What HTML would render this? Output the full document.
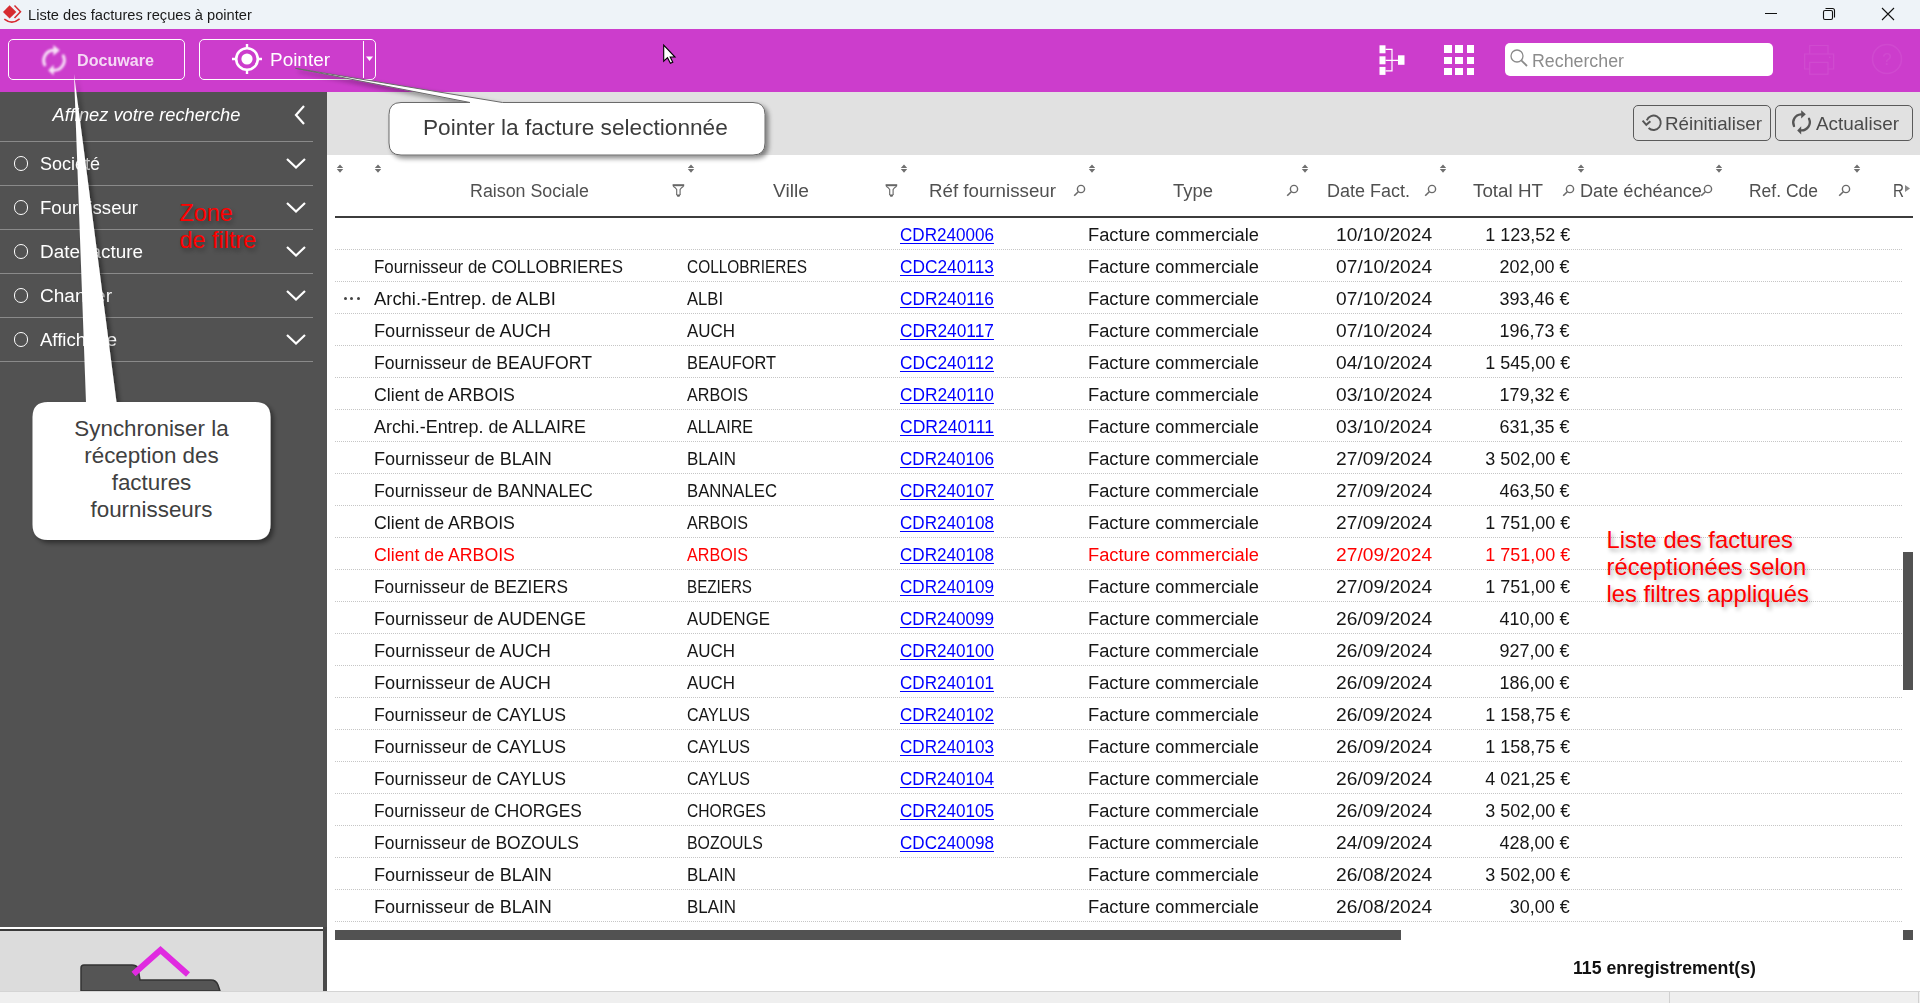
<!DOCTYPE html><html><head><meta charset="utf-8"><style>
html,body{margin:0;padding:0;}
body{width:1920px;height:1003px;overflow:hidden;position:relative;background:#fff;font-family:"Liberation Sans",sans-serif;}
.a{position:absolute;}
.t{position:absolute;white-space:pre;line-height:1;}
.u{text-decoration:underline;text-underline-offset:2px;text-decoration-thickness:1px;}
</style></head><body>

<div class="a" style="left:0;top:0;width:1920px;height:29px;background:#EEF3F8;"></div>
<svg class="a" style="left:0;top:0" width="24" height="26" viewBox="0 0 24 26">
<path d="M3 12 L9.6 5.2 L16.3 12 L9.6 18.6 Z" fill="#D62B30"/>
<path d="M14.5 5.6 L20.5 11.8 L14.5 18.1" fill="none" stroke="#D62B30" stroke-width="1.5"/>
<path d="M4.3 19.2 Q12 25.2 19.6 18.9" fill="none" stroke="#D62B30" stroke-width="1.5"/>
</svg>
<div class="t" style="top:7.33px;font-size:15.2px;color:#1a1a1a;left:28.00px;transform-origin:0 0;transform:scaleX(0.9640);">Liste des factures reçues à pointer</div>
<div class="a" style="left:1765px;top:13px;width:12px;height:1px;background:#111;"></div>
<svg class="a" style="left:1822px;top:7px" width="14" height="14" viewBox="0 0 14 14">
<rect x="1.5" y="3.5" width="9" height="9" rx="1.5" fill="none" stroke="#111" stroke-width="1.1"/>
<path d="M3.5 1.5 H10.5 Q12.5 1.5 12.5 3.5 V10.5" fill="none" stroke="#111" stroke-width="1.1"/>
</svg>
<svg class="a" style="left:1881px;top:7px" width="14" height="14" viewBox="0 0 14 14">
<path d="M1 1 L13 13 M13 1 L1 13" stroke="#111" stroke-width="1.1"/>
</svg>
<div class="a" style="left:0;top:29px;width:1920px;height:63px;background:#CC3DCC;"></div>
<div class="a" style="left:8px;top:39px;width:175px;height:38.5px;border:1.5px solid #fff;border-radius:5px;"></div>
<svg class="a" style="left:40px;top:42px;opacity:0.85;filter:blur(0.8px)" width="34" height="36" viewBox="0 0 34 34">
<g transform="scale(1.24) translate(-4.2,-2.4)">
<path d="M8 20 A8.2 8.2 0 0 1 14.9 8.3" fill="none" stroke="#fff" stroke-width="2.4" stroke-linecap="round"/>
<path d="M15 4 L20.2 8.3 L15 12.6 Z" fill="#fff"/>
<path d="M23 12.7 A8.2 8.2 0 0 1 15.2 24.4" fill="none" stroke="#fff" stroke-width="2.4" stroke-linecap="round"/>
<path d="M15.2 20 L10.8 24.4 L15.2 28.6 Z" fill="#fff"/>
</g></svg>
<div class="t" style="top:51.71px;font-size:17px;color:rgba(255,255,255,0.8);font-weight:bold;left:77.00px;transform-origin:0 0;transform:scaleX(0.9477);filter:blur(0.75px);">Docuware</div>
<div class="a" style="left:199px;top:39px;width:175px;height:38.5px;border:1.5px solid #fff;border-radius:5px;"></div>
<div class="a" style="left:363px;top:41px;width:1.2px;height:37px;background:#fff;"></div>
<svg class="a" style="left:365px;top:56px" width="9" height="6" viewBox="0 0 9 6"><path d="M1 0.5 H8 L4.5 5 Z" fill="#fff"/></svg>
<svg class="a" style="left:231px;top:43px" width="32" height="32" viewBox="0 0 32 32">
<circle cx="16" cy="16" r="10.8" fill="none" stroke="#fff" stroke-width="2.6"/>
<circle cx="16" cy="16" r="5.6" fill="#fff"/>
<path d="M16 1 V5 M16 27 V31 M1 16 H5 M27 16 H31" stroke="#fff" stroke-width="2.4"/>
</svg>
<div class="t" style="top:52.09px;font-size:17.5px;color:#fff;left:269.50px;transform-origin:0 0;transform:scaleX(1.0820);">Pointer</div>
<svg class="a" style="left:1378px;top:44px" width="28" height="32" viewBox="0 0 28 32">
<rect x="1.5" y="1.3" width="6" height="8" fill="#fff"/><rect x="1.5" y="12.3" width="6" height="8" fill="#fff"/><rect x="1.5" y="22.9" width="6" height="8" fill="#fff"/>
<rect x="20" y="11.3" width="6.5" height="9.5" fill="#fff"/>
<path d="M7.5 5.3 H14 V26.9 H7.5 M7.5 16.3 H20" fill="none" stroke="#fff" stroke-width="1.2"/>
</svg>
<div class="a" style="left:1444.0px;top:45.3px;width:7.5px;height:7.5px;background:#fff;"></div>
<div class="a" style="left:1455.3px;top:45.3px;width:7.5px;height:7.5px;background:#fff;"></div>
<div class="a" style="left:1466.6px;top:45.3px;width:7.5px;height:7.5px;background:#fff;"></div>
<div class="a" style="left:1444.0px;top:56.5px;width:7.5px;height:7.5px;background:#fff;"></div>
<div class="a" style="left:1455.3px;top:56.5px;width:7.5px;height:7.5px;background:#fff;"></div>
<div class="a" style="left:1466.6px;top:56.5px;width:7.5px;height:7.5px;background:#fff;"></div>
<div class="a" style="left:1444.0px;top:67.7px;width:7.5px;height:7.5px;background:#fff;"></div>
<div class="a" style="left:1455.3px;top:67.7px;width:7.5px;height:7.5px;background:#fff;"></div>
<div class="a" style="left:1466.6px;top:67.7px;width:7.5px;height:7.5px;background:#fff;"></div>
<div class="a" style="left:1505px;top:43px;width:268px;height:33px;background:#fff;border-radius:5px;"></div>
<svg class="a" style="left:1509px;top:48px" width="20" height="20" viewBox="0 0 20 20">
<circle cx="8" cy="8" r="6" fill="none" stroke="#8a8a8a" stroke-width="1.3"/>
<path d="M12.3 12.3 L18 18" stroke="#8a8a8a" stroke-width="1.8"/>
</svg>
<div class="t" style="top:53.00px;font-size:17.6px;color:#8c8c8c;left:1531.50px;transform-origin:0 0;transform:scaleX(1.0112);">Rechercher</div>
<svg class="a" style="left:1800px;top:40px" width="40" height="40" viewBox="1800 40 40 40" opacity="0.07">
<path d="M1809.7 53.7 V45.5 H1828 V53.7" fill="none" stroke="#fff" stroke-width="1.2"/>
<path d="M1809.7 69 H1804.6 V54 H1833.6 V69 H1828" fill="none" stroke="#fff" stroke-width="1.2"/>
<rect x="1809.7" y="62.4" width="18.3" height="11.8" fill="none" stroke="#fff" stroke-width="1.2"/>
<circle cx="1829.8" cy="57.3" r="0.9" fill="#fff"/>
</svg>
<svg class="a" style="left:1871px;top:43px" width="32" height="32" viewBox="0 0 32 32" opacity="0.06">
<circle cx="16" cy="16" r="14.5" fill="none" stroke="#fff" stroke-width="1.5"/>
<text x="16" y="22" font-size="17" text-anchor="middle" fill="#fff" font-family="Liberation Sans">?</text>
</svg>
<div class="a" style="left:0;top:92px;width:327px;height:899px;background:#525252;"></div>
<div class="t" style="top:106.50px;font-size:17.6px;color:#fff;font-style:italic;left:55.51px;transform-origin:90.49px 0;transform:scaleX(1.0388);">Affinez votre recherche</div>
<svg class="a" style="left:293px;top:104px" width="14" height="22" viewBox="0 0 14 22"><path d="M11 2 L3 11 L11 20" fill="none" stroke="#fff" stroke-width="2.2"/></svg>
<div class="a" style="left:0;top:141px;width:313px;height:1px;background:#8a8a8a;"></div>
<div class="a" style="left:0;top:185px;width:313px;height:1px;background:#8a8a8a;"></div>
<div class="a" style="left:0;top:229px;width:313px;height:1px;background:#8a8a8a;"></div>
<div class="a" style="left:0;top:273px;width:313px;height:1px;background:#8a8a8a;"></div>
<div class="a" style="left:0;top:317px;width:313px;height:1px;background:#8a8a8a;"></div>
<div class="a" style="left:0;top:361px;width:313px;height:1px;background:#8a8a8a;"></div>
<div class="a" style="left:13.5px;top:156px;width:12.5px;height:12.5px;border:1.5px solid #fff;border-radius:50%;"></div>
<div class="t" style="top:155.50px;font-size:17.6px;color:#fff;left:39.50px;transform-origin:0 0;transform:scaleX(1.0220);">Société</div>
<svg class="a" style="left:285px;top:157px" width="22" height="12" viewBox="0 0 22 12"><path d="M2 2 L11 10.5 L20 2" fill="none" stroke="#fff" stroke-width="2.2"/></svg>
<div class="a" style="left:13.5px;top:200px;width:12.5px;height:12.5px;border:1.5px solid #fff;border-radius:50%;"></div>
<div class="t" style="top:199.50px;font-size:17.6px;color:#fff;left:39.50px;transform-origin:0 0;transform:scaleX(1.0546);">Fournisseur</div>
<svg class="a" style="left:285px;top:201px" width="22" height="12" viewBox="0 0 22 12"><path d="M2 2 L11 10.5 L20 2" fill="none" stroke="#fff" stroke-width="2.2"/></svg>
<div class="a" style="left:13.5px;top:244px;width:12.5px;height:12.5px;border:1.5px solid #fff;border-radius:50%;"></div>
<div class="t" style="top:243.50px;font-size:17.6px;color:#fff;left:39.50px;transform-origin:0 0;transform:scaleX(1.0743);">Date facture</div>
<svg class="a" style="left:285px;top:245px" width="22" height="12" viewBox="0 0 22 12"><path d="M2 2 L11 10.5 L20 2" fill="none" stroke="#fff" stroke-width="2.2"/></svg>
<div class="a" style="left:13.5px;top:288px;width:12.5px;height:12.5px;border:1.5px solid #fff;border-radius:50%;"></div>
<div class="t" style="top:287.50px;font-size:17.6px;color:#fff;left:39.50px;transform-origin:0 0;transform:scaleX(1.0823);">Chantier</div>
<svg class="a" style="left:285px;top:289px" width="22" height="12" viewBox="0 0 22 12"><path d="M2 2 L11 10.5 L20 2" fill="none" stroke="#fff" stroke-width="2.2"/></svg>
<div class="a" style="left:13.5px;top:332px;width:12.5px;height:12.5px;border:1.5px solid #fff;border-radius:50%;"></div>
<div class="t" style="top:331.50px;font-size:17.6px;color:#fff;left:39.50px;transform-origin:0 0;transform:scaleX(1.0538);">Affichage</div>
<svg class="a" style="left:285px;top:333px" width="22" height="12" viewBox="0 0 22 12"><path d="M2 2 L11 10.5 L20 2" fill="none" stroke="#fff" stroke-width="2.2"/></svg>
<div class="a" style="left:0;top:927px;width:323px;height:2px;background:#fff;"></div>
<div class="a" style="left:0;top:929px;width:323px;height:2px;background:#3a3a3a;"></div>
<div class="a" style="left:0;top:931px;width:323px;height:60px;background:#DCDCDC;"></div>
<div class="a" style="left:323px;top:927px;width:4px;height:64px;background:#4a4a4a;"></div>
<svg class="a" style="left:78px;top:940px" width="150" height="51" viewBox="0 0 150 51">
<path d="M3 51 V28 Q3 25 6 25 H54 Q58 25 60 28 L62 40 H133 Q138 40 140 45 L142 51 Z" fill="#555" stroke="#333" stroke-width="1.5"/>
<path d="M55.5 34 L82.5 10 L110 34.5" fill="none" stroke="#E02AE0" stroke-width="6"/>
</svg>
<div class="a" style="left:327px;top:92px;width:1593px;height:63px;background:#E1E1E1;"></div>
<div class="a" style="left:1633px;top:105px;width:136px;height:34px;border:1px solid #5a5a5a;border-radius:5px;"></div>
<div class="a" style="left:1775px;top:105px;width:136px;height:34px;border:1px solid #5a5a5a;border-radius:5px;"></div>
<svg class="a" style="left:1636px;top:106px" width="40" height="34" viewBox="0 0 40 34">
<path d="M12.6 22 A7.2 7.2 0 1 0 10.8 14.3" fill="none" stroke="#555" stroke-width="1.9"/>
<path d="M6.6 14.6 L10.3 18.8 L14.4 15.2" fill="none" stroke="#555" stroke-width="2" stroke-linejoin="miter"/>
</svg>
<svg class="a" style="left:1786px;top:106px" width="34" height="34" viewBox="0 0 34 34">
<path d="M8 20 A8.2 8.2 0 0 1 14.9 8.3" fill="none" stroke="#555" stroke-width="2.3" stroke-linecap="round"/>
<path d="M15.2 4.2 L19.8 8.3 L15.2 12.4 Z" fill="#555"/>
<path d="M23 12.7 A8.2 8.2 0 0 1 15.2 24.4" fill="none" stroke="#555" stroke-width="2.3" stroke-linecap="round"/>
<path d="M15.2 20.2 L11.2 24.4 L15.2 28.4 Z" fill="#555"/>
</svg>
<div class="t" style="top:114.94px;font-size:18.5px;color:#4a4a4a;left:1664.50px;transform-origin:0 0;transform:scaleX(1.0144);">Réinitialiser</div>
<div class="t" style="top:114.94px;font-size:18.5px;color:#4a4a4a;left:1816.00px;transform-origin:0 0;transform:scaleX(1.0218);">Actualiser</div>
<svg class="a" style="left:336px;top:164px" width="8" height="10" viewBox="0 0 8 10"><path d="M4 0.6 L7.2 4 H0.8 Z M0.8 5 H7.2 L4 8.8 Z" fill="#707070"/></svg>
<svg class="a" style="left:374px;top:164px" width="8" height="10" viewBox="0 0 8 10"><path d="M4 0.6 L7.2 4 H0.8 Z M0.8 5 H7.2 L4 8.8 Z" fill="#707070"/></svg>
<svg class="a" style="left:687px;top:164px" width="8" height="10" viewBox="0 0 8 10"><path d="M4 0.6 L7.2 4 H0.8 Z M0.8 5 H7.2 L4 8.8 Z" fill="#707070"/></svg>
<svg class="a" style="left:900px;top:164px" width="8" height="10" viewBox="0 0 8 10"><path d="M4 0.6 L7.2 4 H0.8 Z M0.8 5 H7.2 L4 8.8 Z" fill="#707070"/></svg>
<svg class="a" style="left:1088px;top:164px" width="8" height="10" viewBox="0 0 8 10"><path d="M4 0.6 L7.2 4 H0.8 Z M0.8 5 H7.2 L4 8.8 Z" fill="#707070"/></svg>
<svg class="a" style="left:1301px;top:164px" width="8" height="10" viewBox="0 0 8 10"><path d="M4 0.6 L7.2 4 H0.8 Z M0.8 5 H7.2 L4 8.8 Z" fill="#707070"/></svg>
<svg class="a" style="left:1439px;top:164px" width="8" height="10" viewBox="0 0 8 10"><path d="M4 0.6 L7.2 4 H0.8 Z M0.8 5 H7.2 L4 8.8 Z" fill="#707070"/></svg>
<svg class="a" style="left:1577px;top:164px" width="8" height="10" viewBox="0 0 8 10"><path d="M4 0.6 L7.2 4 H0.8 Z M0.8 5 H7.2 L4 8.8 Z" fill="#707070"/></svg>
<svg class="a" style="left:1715px;top:164px" width="8" height="10" viewBox="0 0 8 10"><path d="M4 0.6 L7.2 4 H0.8 Z M0.8 5 H7.2 L4 8.8 Z" fill="#707070"/></svg>
<svg class="a" style="left:1853px;top:164px" width="8" height="10" viewBox="0 0 8 10"><path d="M4 0.6 L7.2 4 H0.8 Z M0.8 5 H7.2 L4 8.8 Z" fill="#707070"/></svg>
<div class="t" style="top:182.50px;font-size:17.6px;color:#505050;left:469.50px;transform-origin:0 0;transform:scaleX(1.0136);">Raison Sociale</div>
<div class="t" style="top:182.50px;font-size:17.6px;color:#505050;left:772.50px;transform-origin:0 0;transform:scaleX(1.0928);">Ville</div>
<div class="t" style="top:182.50px;font-size:17.6px;color:#505050;left:928.75px;transform-origin:0 0;transform:scaleX(1.0641);">Réf fournisseur</div>
<div class="t" style="top:182.50px;font-size:17.6px;color:#505050;left:1173.30px;transform-origin:0 0;transform:scaleX(1.0483);">Type</div>
<div class="t" style="top:182.50px;font-size:17.6px;color:#505050;left:1327.40px;transform-origin:0 0;transform:scaleX(1.0224);">Date Fact.</div>
<div class="t" style="top:182.50px;font-size:17.6px;color:#505050;left:1472.70px;transform-origin:0 0;transform:scaleX(1.0682);">Total HT</div>
<div class="t" style="top:182.50px;font-size:17.6px;color:#505050;left:1580.30px;transform-origin:0 0;transform:scaleX(1.0304);">Date échéance</div>
<div class="t" style="top:182.50px;font-size:17.6px;color:#505050;left:1748.80px;transform-origin:0 0;transform:scaleX(0.9934);">Ref. Cde</div>
<div class="t" style="top:182.50px;font-size:17.6px;color:#505050;left:1892.50px;transform-origin:0 0;transform:scaleX(0.8654);">R</div>
<svg class="a" style="left:672px;top:184px" width="13" height="14" viewBox="0 0 13 14"><rect x="0.6" y="0.2" width="11.6" height="2" fill="#666"/><path d="M1.2 2.2 Q3.8 3.8 4.7 5.4 V11 M8.1 11 V5.4 Q9 3.8 11.6 2.2" fill="none" stroke="#666" stroke-width="1.1"/><path d="M4.2 10.6 H8.6 L7.4 12.8 H5.4 Z" fill="#666"/></svg>
<svg class="a" style="left:885px;top:184px" width="13" height="14" viewBox="0 0 13 14"><rect x="0.6" y="0.2" width="11.6" height="2" fill="#666"/><path d="M1.2 2.2 Q3.8 3.8 4.7 5.4 V11 M8.1 11 V5.4 Q9 3.8 11.6 2.2" fill="none" stroke="#666" stroke-width="1.1"/><path d="M4.2 10.6 H8.6 L7.4 12.8 H5.4 Z" fill="#666"/></svg>
<svg class="a" style="left:1073px;top:184px" width="13" height="13" viewBox="0 0 13 13"><circle cx="8" cy="5" r="3.6" fill="none" stroke="#6a6a6a" stroke-width="1.4"/><path d="M5.3 7.7 L1.2 11.8" stroke="#6a6a6a" stroke-width="1.6"/></svg>
<svg class="a" style="left:1286px;top:184px" width="13" height="13" viewBox="0 0 13 13"><circle cx="8" cy="5" r="3.6" fill="none" stroke="#6a6a6a" stroke-width="1.4"/><path d="M5.3 7.7 L1.2 11.8" stroke="#6a6a6a" stroke-width="1.6"/></svg>
<svg class="a" style="left:1424px;top:184px" width="13" height="13" viewBox="0 0 13 13"><circle cx="8" cy="5" r="3.6" fill="none" stroke="#6a6a6a" stroke-width="1.4"/><path d="M5.3 7.7 L1.2 11.8" stroke="#6a6a6a" stroke-width="1.6"/></svg>
<svg class="a" style="left:1562px;top:184px" width="13" height="13" viewBox="0 0 13 13"><circle cx="8" cy="5" r="3.6" fill="none" stroke="#6a6a6a" stroke-width="1.4"/><path d="M5.3 7.7 L1.2 11.8" stroke="#6a6a6a" stroke-width="1.6"/></svg>
<svg class="a" style="left:1700px;top:184px" width="13" height="13" viewBox="0 0 13 13"><circle cx="8" cy="5" r="3.6" fill="none" stroke="#6a6a6a" stroke-width="1.4"/><path d="M5.3 7.7 L1.2 11.8" stroke="#6a6a6a" stroke-width="1.6"/></svg>
<svg class="a" style="left:1838px;top:184px" width="13" height="13" viewBox="0 0 13 13"><circle cx="8" cy="5" r="3.6" fill="none" stroke="#6a6a6a" stroke-width="1.4"/><path d="M5.3 7.7 L1.2 11.8" stroke="#6a6a6a" stroke-width="1.6"/></svg>
<svg class="a" style="left:1904px;top:184px" width="7" height="9" viewBox="0 0 7 9"><path d="M1 1 L6 4.5 L1 8 Z" fill="#8a8a8a"/></svg>
<div class="a" style="left:335px;top:216px;width:1578px;height:2px;background:#3c3c3c;"></div>
<div class="t u" style="top:226.90px;font-size:17.6px;color:#0000FF;left:900.00px;transform-origin:0 0;transform:scaleX(0.9704);">CDR240006</div>
<div class="t" style="top:226.90px;font-size:17.6px;color:#161616;left:1088.00px;transform-origin:0 0;transform:scaleX(1.0407);">Facture commerciale</div>
<div class="t" style="top:226.90px;font-size:17.6px;color:#161616;left:1344.41px;transform-origin:88.09px 0;transform:scaleX(1.0898);">10/10/2024</div>
<div class="t" style="top:226.90px;font-size:17.6px;color:#161616;left:1486.81px;transform-origin:83.19px 0;transform:scaleX(1.0218);">1 123,52 €</div>
<div class="a" style="left:335px;top:249px;width:1567px;height:1px;background:repeating-linear-gradient(to right,#c6c6c6 0 1px,transparent 1px 2px);"></div>
<div class="t" style="top:258.90px;font-size:17.6px;color:#161616;left:373.80px;transform-origin:0 0;transform:scaleX(0.9606);">Fournisseur de COLLOBRIERES</div>
<div class="t" style="top:258.90px;font-size:17.6px;color:#161616;left:687.00px;transform-origin:0 0;transform:scaleX(0.8763);">COLLOBRIERES</div>
<div class="t u" style="top:258.90px;font-size:17.6px;color:#0000FF;left:900.00px;transform-origin:0 0;transform:scaleX(0.9837);">CDC240113</div>
<div class="t" style="top:258.90px;font-size:17.6px;color:#161616;left:1088.00px;transform-origin:0 0;transform:scaleX(1.0407);">Facture commerciale</div>
<div class="t" style="top:258.90px;font-size:17.6px;color:#161616;left:1344.41px;transform-origin:88.09px 0;transform:scaleX(1.0898);">07/10/2024</div>
<div class="t" style="top:258.90px;font-size:17.6px;color:#161616;left:1501.49px;transform-origin:68.51px 0;transform:scaleX(1.0217);">202,00 €</div>
<div class="a" style="left:335px;top:281px;width:1567px;height:1px;background:repeating-linear-gradient(to right,#c6c6c6 0 1px,transparent 1px 2px);"></div>
<div class="t" style="top:290.90px;font-size:17.6px;color:#161616;left:373.80px;transform-origin:0 0;transform:scaleX(1.0451);">Archi.-Entrep. de ALBI</div>
<div class="t" style="top:290.90px;font-size:17.6px;color:#161616;left:687.00px;transform-origin:0 0;transform:scaleX(0.9435);">ALBI</div>
<div class="t u" style="top:290.90px;font-size:17.6px;color:#0000FF;left:900.00px;transform-origin:0 0;transform:scaleX(0.9837);">CDR240116</div>
<div class="t" style="top:290.90px;font-size:17.6px;color:#161616;left:1088.00px;transform-origin:0 0;transform:scaleX(1.0407);">Facture commerciale</div>
<div class="t" style="top:290.90px;font-size:17.6px;color:#161616;left:1344.41px;transform-origin:88.09px 0;transform:scaleX(1.0898);">07/10/2024</div>
<div class="t" style="top:290.90px;font-size:17.6px;color:#161616;left:1501.49px;transform-origin:68.51px 0;transform:scaleX(1.0217);">393,46 €</div>
<div class="a" style="left:335px;top:313px;width:1567px;height:1px;background:repeating-linear-gradient(to right,#c6c6c6 0 1px,transparent 1px 2px);"></div>
<div class="t" style="top:322.90px;font-size:17.6px;color:#161616;left:373.80px;transform-origin:0 0;transform:scaleX(1.0340);">Fournisseur de AUCH</div>
<div class="t" style="top:322.90px;font-size:17.6px;color:#161616;left:687.00px;transform-origin:0 0;transform:scaleX(0.9625);">AUCH</div>
<div class="t u" style="top:322.90px;font-size:17.6px;color:#0000FF;left:900.00px;transform-origin:0 0;transform:scaleX(0.9837);">CDR240117</div>
<div class="t" style="top:322.90px;font-size:17.6px;color:#161616;left:1088.00px;transform-origin:0 0;transform:scaleX(1.0407);">Facture commerciale</div>
<div class="t" style="top:322.90px;font-size:17.6px;color:#161616;left:1344.41px;transform-origin:88.09px 0;transform:scaleX(1.0898);">07/10/2024</div>
<div class="t" style="top:322.90px;font-size:17.6px;color:#161616;left:1501.49px;transform-origin:68.51px 0;transform:scaleX(1.0217);">196,73 €</div>
<div class="a" style="left:335px;top:345px;width:1567px;height:1px;background:repeating-linear-gradient(to right,#c6c6c6 0 1px,transparent 1px 2px);"></div>
<div class="t" style="top:354.90px;font-size:17.6px;color:#161616;left:373.80px;transform-origin:0 0;transform:scaleX(1.0009);">Fournisseur de BEAUFORT</div>
<div class="t" style="top:354.90px;font-size:17.6px;color:#161616;left:687.00px;transform-origin:0 0;transform:scaleX(0.9318);">BEAUFORT</div>
<div class="t u" style="top:354.90px;font-size:17.6px;color:#0000FF;left:900.00px;transform-origin:0 0;transform:scaleX(0.9837);">CDC240112</div>
<div class="t" style="top:354.90px;font-size:17.6px;color:#161616;left:1088.00px;transform-origin:0 0;transform:scaleX(1.0407);">Facture commerciale</div>
<div class="t" style="top:354.90px;font-size:17.6px;color:#161616;left:1344.41px;transform-origin:88.09px 0;transform:scaleX(1.0898);">04/10/2024</div>
<div class="t" style="top:354.90px;font-size:17.6px;color:#161616;left:1486.81px;transform-origin:83.19px 0;transform:scaleX(1.0218);">1 545,00 €</div>
<div class="a" style="left:335px;top:377px;width:1567px;height:1px;background:repeating-linear-gradient(to right,#c6c6c6 0 1px,transparent 1px 2px);"></div>
<div class="t" style="top:386.90px;font-size:17.6px;color:#161616;left:373.80px;transform-origin:0 0;transform:scaleX(1.0079);">Client de ARBOIS</div>
<div class="t" style="top:386.90px;font-size:17.6px;color:#161616;left:687.00px;transform-origin:0 0;transform:scaleX(0.9172);">ARBOIS</div>
<div class="t u" style="top:386.90px;font-size:17.6px;color:#0000FF;left:900.00px;transform-origin:0 0;transform:scaleX(0.9837);">CDR240110</div>
<div class="t" style="top:386.90px;font-size:17.6px;color:#161616;left:1088.00px;transform-origin:0 0;transform:scaleX(1.0407);">Facture commerciale</div>
<div class="t" style="top:386.90px;font-size:17.6px;color:#161616;left:1344.41px;transform-origin:88.09px 0;transform:scaleX(1.0898);">03/10/2024</div>
<div class="t" style="top:386.90px;font-size:17.6px;color:#161616;left:1501.49px;transform-origin:68.51px 0;transform:scaleX(1.0217);">179,32 €</div>
<div class="a" style="left:335px;top:409px;width:1567px;height:1px;background:repeating-linear-gradient(to right,#c6c6c6 0 1px,transparent 1px 2px);"></div>
<div class="t" style="top:418.90px;font-size:17.6px;color:#161616;left:373.80px;transform-origin:0 0;transform:scaleX(1.0174);">Archi.-Entrep. de ALLAIRE</div>
<div class="t" style="top:418.90px;font-size:17.6px;color:#161616;left:687.00px;transform-origin:0 0;transform:scaleX(0.9116);">ALLAIRE</div>
<div class="t u" style="top:418.90px;font-size:17.6px;color:#0000FF;left:900.00px;transform-origin:0 0;transform:scaleX(0.9973);">CDR240111</div>
<div class="t" style="top:418.90px;font-size:17.6px;color:#161616;left:1088.00px;transform-origin:0 0;transform:scaleX(1.0407);">Facture commerciale</div>
<div class="t" style="top:418.90px;font-size:17.6px;color:#161616;left:1344.41px;transform-origin:88.09px 0;transform:scaleX(1.0898);">03/10/2024</div>
<div class="t" style="top:418.90px;font-size:17.6px;color:#161616;left:1501.49px;transform-origin:68.51px 0;transform:scaleX(1.0217);">631,35 €</div>
<div class="a" style="left:335px;top:441px;width:1567px;height:1px;background:repeating-linear-gradient(to right,#c6c6c6 0 1px,transparent 1px 2px);"></div>
<div class="t" style="top:450.90px;font-size:17.6px;color:#161616;left:373.80px;transform-origin:0 0;transform:scaleX(1.0280);">Fournisseur de BLAIN</div>
<div class="t" style="top:450.90px;font-size:17.6px;color:#161616;left:687.00px;transform-origin:0 0;transform:scaleX(0.9633);">BLAIN</div>
<div class="t u" style="top:450.90px;font-size:17.6px;color:#0000FF;left:900.00px;transform-origin:0 0;transform:scaleX(0.9704);">CDR240106</div>
<div class="t" style="top:450.90px;font-size:17.6px;color:#161616;left:1088.00px;transform-origin:0 0;transform:scaleX(1.0407);">Facture commerciale</div>
<div class="t" style="top:450.90px;font-size:17.6px;color:#161616;left:1344.41px;transform-origin:88.09px 0;transform:scaleX(1.0898);">27/09/2024</div>
<div class="t" style="top:450.90px;font-size:17.6px;color:#161616;left:1486.81px;transform-origin:83.19px 0;transform:scaleX(1.0218);">3 502,00 €</div>
<div class="a" style="left:335px;top:473px;width:1567px;height:1px;background:repeating-linear-gradient(to right,#c6c6c6 0 1px,transparent 1px 2px);"></div>
<div class="t" style="top:482.90px;font-size:17.6px;color:#161616;left:373.80px;transform-origin:0 0;transform:scaleX(1.0085);">Fournisseur de BANNALEC</div>
<div class="t" style="top:482.90px;font-size:17.6px;color:#161616;left:687.00px;transform-origin:0 0;transform:scaleX(0.9486);">BANNALEC</div>
<div class="t u" style="top:482.90px;font-size:17.6px;color:#0000FF;left:900.00px;transform-origin:0 0;transform:scaleX(0.9704);">CDR240107</div>
<div class="t" style="top:482.90px;font-size:17.6px;color:#161616;left:1088.00px;transform-origin:0 0;transform:scaleX(1.0407);">Facture commerciale</div>
<div class="t" style="top:482.90px;font-size:17.6px;color:#161616;left:1344.41px;transform-origin:88.09px 0;transform:scaleX(1.0898);">27/09/2024</div>
<div class="t" style="top:482.90px;font-size:17.6px;color:#161616;left:1501.49px;transform-origin:68.51px 0;transform:scaleX(1.0217);">463,50 €</div>
<div class="a" style="left:335px;top:505px;width:1567px;height:1px;background:repeating-linear-gradient(to right,#c6c6c6 0 1px,transparent 1px 2px);"></div>
<div class="t" style="top:514.90px;font-size:17.6px;color:#161616;left:373.80px;transform-origin:0 0;transform:scaleX(1.0079);">Client de ARBOIS</div>
<div class="t" style="top:514.90px;font-size:17.6px;color:#161616;left:687.00px;transform-origin:0 0;transform:scaleX(0.9172);">ARBOIS</div>
<div class="t u" style="top:514.90px;font-size:17.6px;color:#0000FF;left:900.00px;transform-origin:0 0;transform:scaleX(0.9704);">CDR240108</div>
<div class="t" style="top:514.90px;font-size:17.6px;color:#161616;left:1088.00px;transform-origin:0 0;transform:scaleX(1.0407);">Facture commerciale</div>
<div class="t" style="top:514.90px;font-size:17.6px;color:#161616;left:1344.41px;transform-origin:88.09px 0;transform:scaleX(1.0898);">27/09/2024</div>
<div class="t" style="top:514.90px;font-size:17.6px;color:#161616;left:1486.81px;transform-origin:83.19px 0;transform:scaleX(1.0218);">1 751,00 €</div>
<div class="a" style="left:335px;top:537px;width:1567px;height:1px;background:repeating-linear-gradient(to right,#c6c6c6 0 1px,transparent 1px 2px);"></div>
<div class="t" style="top:546.90px;font-size:17.6px;color:#FF0000;left:373.80px;transform-origin:0 0;transform:scaleX(1.0079);">Client de ARBOIS</div>
<div class="t" style="top:546.90px;font-size:17.6px;color:#FF0000;left:687.00px;transform-origin:0 0;transform:scaleX(0.9172);">ARBOIS</div>
<div class="t u" style="top:546.90px;font-size:17.6px;color:#0000FF;left:900.00px;transform-origin:0 0;transform:scaleX(0.9704);">CDR240108</div>
<div class="t" style="top:546.90px;font-size:17.6px;color:#FF0000;left:1088.00px;transform-origin:0 0;transform:scaleX(1.0407);">Facture commerciale</div>
<div class="t" style="top:546.90px;font-size:17.6px;color:#FF0000;left:1344.41px;transform-origin:88.09px 0;transform:scaleX(1.0898);">27/09/2024</div>
<div class="t" style="top:546.90px;font-size:17.6px;color:#FF0000;left:1486.81px;transform-origin:83.19px 0;transform:scaleX(1.0218);">1 751,00 €</div>
<div class="a" style="left:335px;top:569px;width:1567px;height:1px;background:repeating-linear-gradient(to right,#c6c6c6 0 1px,transparent 1px 2px);"></div>
<div class="t" style="top:578.90px;font-size:17.6px;color:#161616;left:373.80px;transform-origin:0 0;transform:scaleX(0.9818);">Fournisseur de BEZIERS</div>
<div class="t" style="top:578.90px;font-size:17.6px;color:#161616;left:687.00px;transform-origin:0 0;transform:scaleX(0.8631);">BEZIERS</div>
<div class="t u" style="top:578.90px;font-size:17.6px;color:#0000FF;left:900.00px;transform-origin:0 0;transform:scaleX(0.9704);">CDR240109</div>
<div class="t" style="top:578.90px;font-size:17.6px;color:#161616;left:1088.00px;transform-origin:0 0;transform:scaleX(1.0407);">Facture commerciale</div>
<div class="t" style="top:578.90px;font-size:17.6px;color:#161616;left:1344.41px;transform-origin:88.09px 0;transform:scaleX(1.0898);">27/09/2024</div>
<div class="t" style="top:578.90px;font-size:17.6px;color:#161616;left:1486.81px;transform-origin:83.19px 0;transform:scaleX(1.0218);">1 751,00 €</div>
<div class="a" style="left:335px;top:601px;width:1567px;height:1px;background:repeating-linear-gradient(to right,#c6c6c6 0 1px,transparent 1px 2px);"></div>
<div class="t" style="top:610.90px;font-size:17.6px;color:#161616;left:373.80px;transform-origin:0 0;transform:scaleX(1.0175);">Fournisseur de AUDENGE</div>
<div class="t" style="top:610.90px;font-size:17.6px;color:#161616;left:687.00px;transform-origin:0 0;transform:scaleX(0.9536);">AUDENGE</div>
<div class="t u" style="top:610.90px;font-size:17.6px;color:#0000FF;left:900.00px;transform-origin:0 0;transform:scaleX(0.9704);">CDR240099</div>
<div class="t" style="top:610.90px;font-size:17.6px;color:#161616;left:1088.00px;transform-origin:0 0;transform:scaleX(1.0407);">Facture commerciale</div>
<div class="t" style="top:610.90px;font-size:17.6px;color:#161616;left:1344.41px;transform-origin:88.09px 0;transform:scaleX(1.0898);">26/09/2024</div>
<div class="t" style="top:610.90px;font-size:17.6px;color:#161616;left:1501.49px;transform-origin:68.51px 0;transform:scaleX(1.0217);">410,00 €</div>
<div class="a" style="left:335px;top:633px;width:1567px;height:1px;background:repeating-linear-gradient(to right,#c6c6c6 0 1px,transparent 1px 2px);"></div>
<div class="t" style="top:642.90px;font-size:17.6px;color:#161616;left:373.80px;transform-origin:0 0;transform:scaleX(1.0340);">Fournisseur de AUCH</div>
<div class="t" style="top:642.90px;font-size:17.6px;color:#161616;left:687.00px;transform-origin:0 0;transform:scaleX(0.9625);">AUCH</div>
<div class="t u" style="top:642.90px;font-size:17.6px;color:#0000FF;left:900.00px;transform-origin:0 0;transform:scaleX(0.9704);">CDR240100</div>
<div class="t" style="top:642.90px;font-size:17.6px;color:#161616;left:1088.00px;transform-origin:0 0;transform:scaleX(1.0407);">Facture commerciale</div>
<div class="t" style="top:642.90px;font-size:17.6px;color:#161616;left:1344.41px;transform-origin:88.09px 0;transform:scaleX(1.0898);">26/09/2024</div>
<div class="t" style="top:642.90px;font-size:17.6px;color:#161616;left:1501.49px;transform-origin:68.51px 0;transform:scaleX(1.0217);">927,00 €</div>
<div class="a" style="left:335px;top:665px;width:1567px;height:1px;background:repeating-linear-gradient(to right,#c6c6c6 0 1px,transparent 1px 2px);"></div>
<div class="t" style="top:674.90px;font-size:17.6px;color:#161616;left:373.80px;transform-origin:0 0;transform:scaleX(1.0340);">Fournisseur de AUCH</div>
<div class="t" style="top:674.90px;font-size:17.6px;color:#161616;left:687.00px;transform-origin:0 0;transform:scaleX(0.9625);">AUCH</div>
<div class="t u" style="top:674.90px;font-size:17.6px;color:#0000FF;left:900.00px;transform-origin:0 0;transform:scaleX(0.9704);">CDR240101</div>
<div class="t" style="top:674.90px;font-size:17.6px;color:#161616;left:1088.00px;transform-origin:0 0;transform:scaleX(1.0407);">Facture commerciale</div>
<div class="t" style="top:674.90px;font-size:17.6px;color:#161616;left:1344.41px;transform-origin:88.09px 0;transform:scaleX(1.0898);">26/09/2024</div>
<div class="t" style="top:674.90px;font-size:17.6px;color:#161616;left:1501.49px;transform-origin:68.51px 0;transform:scaleX(1.0217);">186,00 €</div>
<div class="a" style="left:335px;top:697px;width:1567px;height:1px;background:repeating-linear-gradient(to right,#c6c6c6 0 1px,transparent 1px 2px);"></div>
<div class="t" style="top:706.90px;font-size:17.6px;color:#161616;left:373.80px;transform-origin:0 0;transform:scaleX(1.0031);">Fournisseur de CAYLUS</div>
<div class="t" style="top:706.90px;font-size:17.6px;color:#161616;left:687.00px;transform-origin:0 0;transform:scaleX(0.9114);">CAYLUS</div>
<div class="t u" style="top:706.90px;font-size:17.6px;color:#0000FF;left:900.00px;transform-origin:0 0;transform:scaleX(0.9704);">CDR240102</div>
<div class="t" style="top:706.90px;font-size:17.6px;color:#161616;left:1088.00px;transform-origin:0 0;transform:scaleX(1.0407);">Facture commerciale</div>
<div class="t" style="top:706.90px;font-size:17.6px;color:#161616;left:1344.41px;transform-origin:88.09px 0;transform:scaleX(1.0898);">26/09/2024</div>
<div class="t" style="top:706.90px;font-size:17.6px;color:#161616;left:1486.81px;transform-origin:83.19px 0;transform:scaleX(1.0218);">1 158,75 €</div>
<div class="a" style="left:335px;top:729px;width:1567px;height:1px;background:repeating-linear-gradient(to right,#c6c6c6 0 1px,transparent 1px 2px);"></div>
<div class="t" style="top:738.90px;font-size:17.6px;color:#161616;left:373.80px;transform-origin:0 0;transform:scaleX(1.0031);">Fournisseur de CAYLUS</div>
<div class="t" style="top:738.90px;font-size:17.6px;color:#161616;left:687.00px;transform-origin:0 0;transform:scaleX(0.9114);">CAYLUS</div>
<div class="t u" style="top:738.90px;font-size:17.6px;color:#0000FF;left:900.00px;transform-origin:0 0;transform:scaleX(0.9704);">CDR240103</div>
<div class="t" style="top:738.90px;font-size:17.6px;color:#161616;left:1088.00px;transform-origin:0 0;transform:scaleX(1.0407);">Facture commerciale</div>
<div class="t" style="top:738.90px;font-size:17.6px;color:#161616;left:1344.41px;transform-origin:88.09px 0;transform:scaleX(1.0898);">26/09/2024</div>
<div class="t" style="top:738.90px;font-size:17.6px;color:#161616;left:1486.81px;transform-origin:83.19px 0;transform:scaleX(1.0218);">1 158,75 €</div>
<div class="a" style="left:335px;top:761px;width:1567px;height:1px;background:repeating-linear-gradient(to right,#c6c6c6 0 1px,transparent 1px 2px);"></div>
<div class="t" style="top:770.90px;font-size:17.6px;color:#161616;left:373.80px;transform-origin:0 0;transform:scaleX(1.0031);">Fournisseur de CAYLUS</div>
<div class="t" style="top:770.90px;font-size:17.6px;color:#161616;left:687.00px;transform-origin:0 0;transform:scaleX(0.9114);">CAYLUS</div>
<div class="t u" style="top:770.90px;font-size:17.6px;color:#0000FF;left:900.00px;transform-origin:0 0;transform:scaleX(0.9704);">CDR240104</div>
<div class="t" style="top:770.90px;font-size:17.6px;color:#161616;left:1088.00px;transform-origin:0 0;transform:scaleX(1.0407);">Facture commerciale</div>
<div class="t" style="top:770.90px;font-size:17.6px;color:#161616;left:1344.41px;transform-origin:88.09px 0;transform:scaleX(1.0898);">26/09/2024</div>
<div class="t" style="top:770.90px;font-size:17.6px;color:#161616;left:1486.81px;transform-origin:83.19px 0;transform:scaleX(1.0218);">4 021,25 €</div>
<div class="a" style="left:335px;top:793px;width:1567px;height:1px;background:repeating-linear-gradient(to right,#c6c6c6 0 1px,transparent 1px 2px);"></div>
<div class="t" style="top:802.90px;font-size:17.6px;color:#161616;left:373.80px;transform-origin:0 0;transform:scaleX(0.9845);">Fournisseur de CHORGES</div>
<div class="t" style="top:802.90px;font-size:17.6px;color:#161616;left:687.00px;transform-origin:0 0;transform:scaleX(0.8877);">CHORGES</div>
<div class="t u" style="top:802.90px;font-size:17.6px;color:#0000FF;left:900.00px;transform-origin:0 0;transform:scaleX(0.9704);">CDR240105</div>
<div class="t" style="top:802.90px;font-size:17.6px;color:#161616;left:1088.00px;transform-origin:0 0;transform:scaleX(1.0407);">Facture commerciale</div>
<div class="t" style="top:802.90px;font-size:17.6px;color:#161616;left:1344.41px;transform-origin:88.09px 0;transform:scaleX(1.0898);">26/09/2024</div>
<div class="t" style="top:802.90px;font-size:17.6px;color:#161616;left:1486.81px;transform-origin:83.19px 0;transform:scaleX(1.0218);">3 502,00 €</div>
<div class="a" style="left:335px;top:825px;width:1567px;height:1px;background:repeating-linear-gradient(to right,#c6c6c6 0 1px,transparent 1px 2px);"></div>
<div class="t" style="top:834.90px;font-size:17.6px;color:#161616;left:373.80px;transform-origin:0 0;transform:scaleX(0.9933);">Fournisseur de BOZOULS</div>
<div class="t" style="top:834.90px;font-size:17.6px;color:#161616;left:687.00px;transform-origin:0 0;transform:scaleX(0.9036);">BOZOULS</div>
<div class="t u" style="top:834.90px;font-size:17.6px;color:#0000FF;left:900.00px;transform-origin:0 0;transform:scaleX(0.9704);">CDC240098</div>
<div class="t" style="top:834.90px;font-size:17.6px;color:#161616;left:1088.00px;transform-origin:0 0;transform:scaleX(1.0407);">Facture commerciale</div>
<div class="t" style="top:834.90px;font-size:17.6px;color:#161616;left:1344.41px;transform-origin:88.09px 0;transform:scaleX(1.0898);">24/09/2024</div>
<div class="t" style="top:834.90px;font-size:17.6px;color:#161616;left:1501.49px;transform-origin:68.51px 0;transform:scaleX(1.0217);">428,00 €</div>
<div class="a" style="left:335px;top:857px;width:1567px;height:1px;background:repeating-linear-gradient(to right,#c6c6c6 0 1px,transparent 1px 2px);"></div>
<div class="t" style="top:866.90px;font-size:17.6px;color:#161616;left:373.80px;transform-origin:0 0;transform:scaleX(1.0280);">Fournisseur de BLAIN</div>
<div class="t" style="top:866.90px;font-size:17.6px;color:#161616;left:687.00px;transform-origin:0 0;transform:scaleX(0.9633);">BLAIN</div>
<div class="t" style="top:866.90px;font-size:17.6px;color:#161616;left:1088.00px;transform-origin:0 0;transform:scaleX(1.0407);">Facture commerciale</div>
<div class="t" style="top:866.90px;font-size:17.6px;color:#161616;left:1344.41px;transform-origin:88.09px 0;transform:scaleX(1.0898);">26/08/2024</div>
<div class="t" style="top:866.90px;font-size:17.6px;color:#161616;left:1486.81px;transform-origin:83.19px 0;transform:scaleX(1.0218);">3 502,00 €</div>
<div class="a" style="left:335px;top:889px;width:1567px;height:1px;background:repeating-linear-gradient(to right,#c6c6c6 0 1px,transparent 1px 2px);"></div>
<div class="t" style="top:898.90px;font-size:17.6px;color:#161616;left:373.80px;transform-origin:0 0;transform:scaleX(1.0280);">Fournisseur de BLAIN</div>
<div class="t" style="top:898.90px;font-size:17.6px;color:#161616;left:687.00px;transform-origin:0 0;transform:scaleX(0.9633);">BLAIN</div>
<div class="t" style="top:898.90px;font-size:17.6px;color:#161616;left:1088.00px;transform-origin:0 0;transform:scaleX(1.0407);">Facture commerciale</div>
<div class="t" style="top:898.90px;font-size:17.6px;color:#161616;left:1344.41px;transform-origin:88.09px 0;transform:scaleX(1.0898);">26/08/2024</div>
<div class="t" style="top:898.90px;font-size:17.6px;color:#161616;left:1511.28px;transform-origin:58.72px 0;transform:scaleX(1.0218);">30,00 €</div>
<div class="a" style="left:335px;top:921px;width:1567px;height:1px;background:repeating-linear-gradient(to right,#c6c6c6 0 1px,transparent 1px 2px);"></div>
<div class="a" style="left:343.5px;top:297px;width:3px;height:3px;border-radius:50%;background:#444;"></div>
<div class="a" style="left:350.0px;top:297px;width:3px;height:3px;border-radius:50%;background:#444;"></div>
<div class="a" style="left:356.5px;top:297px;width:3px;height:3px;border-radius:50%;background:#444;"></div>
<div class="a" style="left:335px;top:930px;width:1066px;height:10px;background:#525252;"></div>
<div class="a" style="left:1903px;top:930px;width:10px;height:10px;background:#525252;"></div>
<div class="a" style="left:1903px;top:552px;width:10px;height:138px;background:#525252;"></div>
<div class="t" style="top:959.50px;font-size:17.6px;color:#111;font-weight:bold;left:1573.00px;transform-origin:0 0;transform:scaleX(1.0058);">115 enregistrement(s)</div>
<div class="a" style="left:0;top:991px;width:1920px;height:12px;background:#EFEFEF;border-top:1px solid #D4D4D4;box-sizing:border-box;"></div>
<div class="a" style="left:1669px;top:992px;width:1px;height:11px;background:#D0D0D0;"></div>
<div class="a" style="left:1918px;top:992px;width:1px;height:11px;background:#D0D0D0;"></div>
<div class="t" style="top:201.89px;font-size:23.4px;color:#FF0000;left:179.50px;transform-origin:0 0;transform:scaleX(1.0000);text-shadow:2px 3px 4px rgba(0,0,0,0.32);">Zone</div>
<div class="t" style="top:228.89px;font-size:23.4px;color:#FF0000;left:179.50px;transform-origin:0 0;transform:scaleX(1.0000);text-shadow:2px 3px 4px rgba(0,0,0,0.32);">de filtre</div>
<div class="t" style="top:527.95px;font-size:23.8px;color:#FF0000;left:1606.50px;transform-origin:0 0;transform:scaleX(1.0000);text-shadow:2px 3px 4px rgba(0,0,0,0.32);">Liste des factures</div>
<div class="t" style="top:554.95px;font-size:23.8px;color:#FF0000;left:1606.50px;transform-origin:0 0;transform:scaleX(1.0000);text-shadow:2px 3px 4px rgba(0,0,0,0.32);">réceptionées selon</div>
<div class="t" style="top:581.95px;font-size:23.8px;color:#FF0000;left:1606.50px;transform-origin:0 0;transform:scaleX(1.0000);text-shadow:2px 3px 4px rgba(0,0,0,0.32);">les filtres appliqués</div>
<svg class="a" style="left:0;top:0;overflow:visible" width="1" height="1">
<defs><filter id="sh" x="-20%" y="-20%" width="150%" height="150%"><feGaussianBlur in="SourceAlpha" stdDeviation="2.5"/><feOffset dx="3" dy="3"/><feComponentTransfer><feFuncA type="linear" slope="0.45"/></feComponentTransfer><feMerge><feMergeNode/><feMergeNode in="SourceGraphic"/></feMerge></filter></defs>
<path filter="url(#sh)" d="M48 402 H86 L74 74 L116.5 402 H255 Q270.5 402 270.5 417 V524.5 Q270.5 540 255 540 H48 Q32.5 540 32.5 524.5 V417 Q32.5 402 48 402 Z" fill="#fff"/>
<path filter="url(#sh)" d="M401 102.5 H470 L295.5 68.3 L502.5 102.5 H753 Q765 102.5 765 114.5 V143 Q765 155 753 155 H401 Q389 155 389 143 V114.5 Q389 102.5 401 102.5 Z" fill="#fff" stroke="#6a6a6a" stroke-width="1"/>
</svg>
<div class="t" style="top:417.54px;font-size:22.4px;color:#404040;left:74.31px;transform-origin:77.19px 0;transform:scaleX(1.0000);">Synchroniser la</div>
<div class="t" style="top:444.54px;font-size:22.4px;color:#404040;left:84.25px;transform-origin:67.25px 0;transform:scaleX(1.0000);">réception des</div>
<div class="t" style="top:471.54px;font-size:22.4px;color:#404040;left:111.66px;transform-origin:39.84px 0;transform:scaleX(1.0000);">factures</div>
<div class="t" style="top:498.54px;font-size:22.4px;color:#404040;left:90.49px;transform-origin:61.01px 0;transform:scaleX(1.0000);">fournisseurs</div>
<div class="t" style="top:116.21px;font-size:22.67px;color:#3c3c3c;left:423.00px;transform-origin:0 0;transform:scaleX(1.0001);">Pointer la facture selectionnée</div>
<svg class="a" style="left:660px;top:42px" width="20" height="24" viewBox="660 42 20 24">
<path d="M663.7 45.2 L663.7 61.2 L667.5 57.7 L670.4 63.3 L672.8 62.2 L670.2 57 L675 57 Z" fill="#fff" stroke="#000" stroke-width="1.1" stroke-linejoin="miter"/>
</svg>
</body></html>
